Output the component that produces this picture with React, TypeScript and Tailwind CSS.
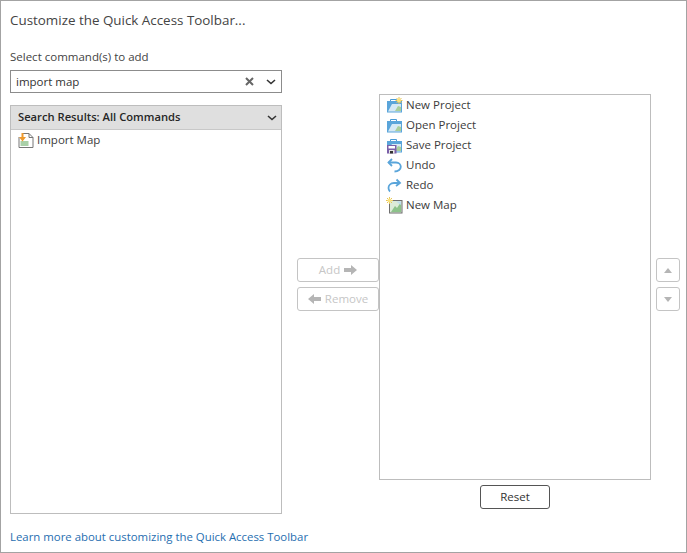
import type { ReactNode } from "react";

const font = "font-['Open_Sans','Noto_Sans',sans-serif]";

function Chevron() {
  return (
    <svg width="10" height="6" viewBox="0 0 10 6" className="shrink-0">
      <path d="M1 1l4 3.5L9 1" fill="none" stroke="#333" strokeWidth="1.6" />
    </svg>
  );
}

function NewSpark({ x, y }: { x: number; y: number }) {
  return (
    <g transform={`translate(${x} ${y})`}>
      <path d="M3.5 0v7M0 3.5h7M1 1l5 5M6 1L1 6" stroke="#e6c45a" strokeWidth="1" />
      <circle cx="3.5" cy="3.5" r="2" fill="#fbe27a" />
    </g>
  );
}

function ProjectIcon({ kind }: { kind: "new" | "open" | "save" }) {
  return (
    <svg width="17" height="17" viewBox="0 0 17 17" className="shrink-0">
      <path d="M4.5 4.5V2.5h6v2" fill="none" stroke="#4a9bd4" />
      <rect x="1" y="4" width="15" height="11.5" fill="#5aa5da" />
      <path d="M2 14.5L6 7h9v7.5z" fill="#d6e9f5" />
      <path d="M9 14l3-5 3 1v4z" fill="#a9cf9a" />
      {kind === "new" && <NewSpark x={9.5} y={0} />}
      {kind === "save" && (
        <g>
          <rect x="1" y="8" width="9.5" height="8.5" fill="#7a5fa8" />
          <rect x="2.5" y="9" width="6.5" height="2.5" fill="#fff" />
          <rect x="3" y="13" width="5.5" height="3.5" fill="#e8e8e8" />
          <rect x="4" y="14" width="3" height="2.5" fill="#333" />
        </g>
      )}
    </svg>
  );
}

function UndoIcon({ flip }: { flip?: boolean }) {
  return (
    <svg width="17" height="17" viewBox="0 0 17 17" className="shrink-0">
      {flip ? (
        <g fill="none" stroke="#5aa5da" strokeWidth="1.8">
          <path d="M10.5 2.5L14 6l-4 3" />
          <path d="M14 6H8c-3.5 0-5.5 2.5-5.5 5 0 1.5.5 2.5 1.5 3.5" />
        </g>
      ) : (
        <g fill="none" stroke="#5aa5da" strokeWidth="1.8">
          <path d="M6 2L2.5 5.5 6 9" />
          <path d="M2.5 5.5H10c3 0 4.8 2 4.8 4.3S12.5 14.5 8.5 14.5" />
        </g>
      )}
    </svg>
  );
}

function NewMapIcon() {
  return (
    <svg width="17" height="17" viewBox="0 0 17 17" className="shrink-0">
      <rect x="3.5" y="3.5" width="12.5" height="12.5" fill="#dcebd8" stroke="#6f6f6f" />
      <path d="M5 15l4-6 2 2 4-6v10z" fill="#8cc28a" />
      <path d="M10 4.5h5V8z" fill="#bcdcf0" />
      <NewSpark x={0} y={0} />
    </svg>
  );
}

function ImportMapIcon() {
  return (
    <svg width="16" height="17" viewBox="1.5 0 16 17" className="shrink-0">
      <path d="M5.5 1.5h7l4 4v10h-14V5" fill="#fff" stroke="#777" />
      <path d="M12.5 1.5v4h4" fill="none" stroke="#777" />
      <rect x="4" y="9" width="8" height="5" fill="#a9d0a8" />
      <path d="M5 1v4H2.5L6 9.5 9.5 5H7V1z" fill="#ee9a2e" />
    </svg>
  );
}

function Row({ icon, label }: { icon: ReactNode; label: string }) {
  return (
    <div className="flex h-5 items-center gap-[3px]">
      {icon}
      <span className="text-[11.5px] leading-5 text-[#3c3c3c]">{label}</span>
    </div>
  );
}

function MoveButton({ children }: { children: ReactNode }) {
  return (
    <button className="flex h-6 items-center justify-center gap-1 rounded-[3px] border border-[#c4c4c4] bg-white text-[11.5px] text-[#c6c6c6]">
      {children}
    </button>
  );
}

export default function App() {
  return (
    <div className={`${font} flex h-[553px] w-[687px] flex-col border border-[#a3a3a3] bg-white pl-[9px]`}>
      <h1 className="mt-[9px] text-[13.4px] leading-5 font-medium text-[#444]">
        Customize the Quick Access Toolbar...
      </h1>

      <div className="mt-[5px] flex h-[480px] items-start">
        <div className="flex w-[272px] flex-col">
          <label className="mt-[12px] h-[19px] text-[11.5px] leading-5 text-[#444]">Select command(s) to add</label>
          <div className="mt-[4px] flex h-[23px] items-center border border-[#8c8c8c] pr-[5px] pl-[5px]">
            <span className="flex-1 text-[11.5px] text-[#333]">import map</span>
            <svg width="9" height="9" viewBox="0 0 9 9" className="mr-[12px]">
              <path d="M1 1l7 7M8 1L1 8" stroke="#666" strokeWidth="2" />
            </svg>
            <Chevron />
          </div>
          <div className="mt-[12px] flex h-[409px] flex-col border border-[#bdbdbd]">
            <div className="flex h-6 shrink-0 items-center justify-between border-b border-[#c8c8c8] bg-[#dfdfdf] pr-[4px] pl-[7px]">
              <span className="text-[11.2px] font-semibold text-[#262626]">Search Results: All Commands</span>
              <Chevron />
            </div>
            <div className="pl-[7px]">
              <Row icon={<ImportMapIcon />} label="Import Map" />
            </div>
          </div>
        </div>

        <div className="mt-[223px] ml-[15px] flex w-[82px] flex-col gap-[5px]">
          <MoveButton>
            Add
            <svg width="13" height="10" viewBox="0 0 13 10">
              <path d="M0 3h7V0l6 5-6 5V7H0z" fill="#b5b5b5" />
            </svg>
          </MoveButton>
          <MoveButton>
            <svg width="13" height="10" viewBox="0 0 13 10">
              <path d="M13 3H6V0L0 5l6 5V7h7z" fill="#b5b5b5" />
            </svg>
            Remove
          </MoveButton>
        </div>

        <div className="mt-[59px] flex w-[272px] flex-col items-center">
          <div className="h-[386px] w-full border border-[#bdbdbd] pl-[6px]">
            <Row icon={<ProjectIcon kind="new" />} label="New Project" />
            <Row icon={<ProjectIcon kind="open" />} label="Open Project" />
            <Row icon={<ProjectIcon kind="save" />} label="Save Project" />
            <Row icon={<UndoIcon />} label="Undo" />
            <Row icon={<UndoIcon flip />} label="Redo" />
            <Row icon={<NewMapIcon />} label="New Map" />
          </div>
          <button className="mt-[5px] h-6 w-[70px] rounded-[3px] border border-[#555] text-[11.5px] text-[#333]">Reset</button>
        </div>

        <div className="mt-[223px] ml-[5px] flex w-6 flex-col gap-[5px]">
          <button className="flex h-6 w-6 items-center justify-center rounded-[3px] border border-[#c4c4c4]">
            <svg width="8" height="5" viewBox="0 0 8 5"><path d="M4 0l4 5H0z" fill="#b5b5b5" /></svg>
          </button>
          <button className="flex h-6 w-6 items-center justify-center rounded-[3px] border border-[#c4c4c4]">
            <svg width="8" height="5" viewBox="0 0 8 5"><path d="M0 0h8L4 5z" fill="#b5b5b5" /></svg>
          </button>
        </div>
      </div>

      <a className="mt-[12px] text-[11.4px] leading-5 text-[#1f6eb0]">Learn more about customizing the Quick Access Toolbar</a>
    </div>
  );
}
